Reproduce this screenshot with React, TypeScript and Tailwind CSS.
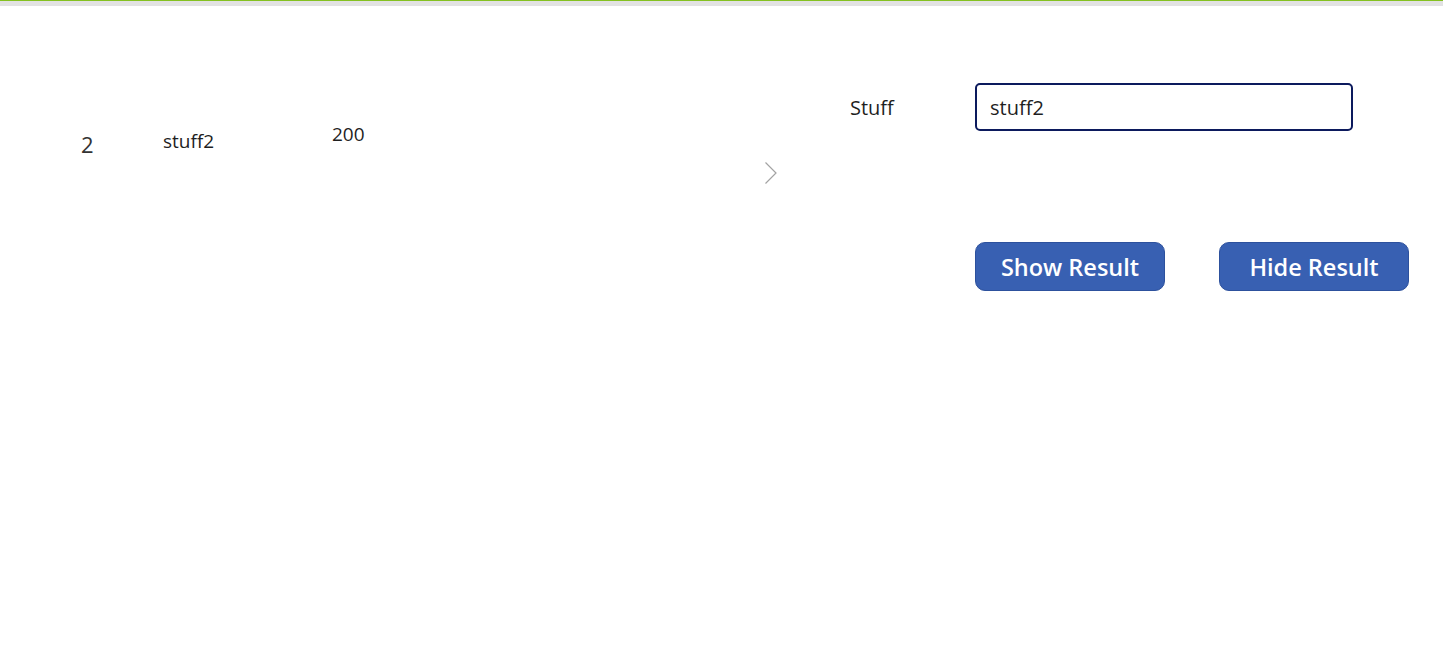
export default function App() {
  return (
    <div className="w-full h-[657px] bg-white font-['Open_Sans',sans-serif] text-[#1f1f1f]">
      {/* top accent */}
      <div className="h-px bg-[#84c11f]" />
      <div className="h-[5px] bg-[#e2e2e2]" />

      <div className="flex">
        {/* gallery */}
        <div className="w-[850px] flex items-start pt-[119px]">
          <div className="w-[163px] pl-[81px] pt-[8px] text-[22px] leading-none text-[#333333]">2</div>
          <div className="w-[169px] pt-[7px] text-[19px] leading-none">stuff2</div>
          <div className="w-[433px] text-[19px] leading-none">200</div>
          <svg width="12" height="22" viewBox="0 0 12 22" className="mt-[37px]">
            <polyline points="0.5,0.5 11,11 0.5,21.5" fill="none" stroke="#a3a3a3" strokeWidth="1.2" />
          </svg>
        </div>

        {/* form */}
        <div className="flex-1 pt-[77px]">
          <div className="flex items-center">
            <div className="w-[125px] pt-[2px] text-[20px] leading-none">Stuff</div>
            <div className="w-[378px] h-[48px] rounded-[5px] border-2 border-[#0c1a5d] flex items-center pl-[13px] pt-[2px] text-[20px] leading-none">
              stuff2
            </div>
          </div>
          <div className="flex gap-[54px] mt-[111px] ml-[125px]">
            <button className="w-[190px] h-[49px] pt-[2px] rounded-[10px] bg-[#3860b2] border border-[#2d519d] text-white text-[23.5px] font-semibold leading-none">
              Show Result
            </button>
            <button className="w-[190px] h-[49px] pt-[2px] rounded-[10px] bg-[#3860b2] border border-[#2d519d] text-white text-[23.5px] font-semibold leading-none">
              Hide Result
            </button>
          </div>
        </div>
      </div>
    </div>
  );
}
